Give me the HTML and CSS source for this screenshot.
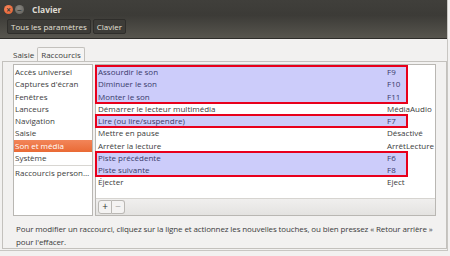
FILE: index.html
```html
<!DOCTYPE html>
<html lang="fr">
<head>
    <meta charset="UTF-8">
    <title>Clavier</title>
    <link rel="stylesheet" href="styles.css">
</head>
<body>
    <div class="window">
        <div class="header">
            <div class="titlebar">
                <span class="btn-close">&times;</span>
                <span class="btn-min">&minus;</span>
                <span class="title">Clavier</span>
            </div>
            <div class="toolbar">
                <span class="tool-btn">Tous les paramètres</span>
                <span class="tool-btn">Clavier</span>
            </div>
        </div>
        <div class="content">
            <div class="tabs">
                <span class="tab">Saisie</span>
                <span class="tab active">Raccourcis</span>
            </div>
            <div class="page">
                <div class="panes">
                    <ul class="sidebar">
                        <li>Accès universel</li>
                        <li>Captures d'écran</li>
                        <li>Fenêtres</li>
                        <li>Lanceurs</li>
                        <li>Navigation</li>
                        <li>Saisie</li>
                        <li class="selected">Son et média</li>
                        <li>Système</li>
                        <li class="sep">Raccourcis person…</li>
                    </ul>
                    <div class="shortcuts">
                        <div class="list">
                            <div class="group">
                                <div class="row"><span class="name">Assourdir le son</span><span class="key">F9</span></div>
                                <div class="row"><span class="name">Diminuer le son</span><span class="key">F10</span></div>
                                <div class="row"><span class="name">Monter le son</span><span class="key">F11</span></div>
                            </div>
                            <div class="row"><span class="name">Démarrer le lecteur multimédia</span><span class="key">MédiaAudio</span></div>
                            <div class="group">
                                <div class="row"><span class="name">Lire (ou lire/suspendre)</span><span class="key">F7</span></div>
                            </div>
                            <div class="row"><span class="name">Mettre en pause</span><span class="key">Désactivé</span></div>
                            <div class="row"><span class="name">Arrêter la lecture</span><span class="key">ArrêtLecture</span></div>
                            <div class="group">
                                <div class="row"><span class="name">Piste précédente</span><span class="key">F6</span></div>
                                <div class="row"><span class="name">Piste suivante</span><span class="key">F8</span></div>
                            </div>
                            <div class="row"><span class="name">Éjecter</span><span class="key">Eject</span></div>
                        </div>
                        <div class="list-tools">
                            <span class="small-btn">+</span><span class="small-btn dim">&minus;</span>
                        </div>
                    </div>
                </div>
                <p class="hint">Pour modifier un raccourci, cliquez sur la ligne et actionnez les nouvelles touches, ou bien pressez « Retour arrière » pour l'effacer.</p>
            </div>
        </div>
    </div>
</body>
</html>
```

FILE: styles.css
```css
body {
    margin: 0;
    padding: 0;
    background-color: #f2f1f0;
    font-family: "Open Sans", "DejaVu Sans", sans-serif;
    font-size: 8px;
    color: #3c3c3c;
    width: 450px;
    height: 256px;
    overflow: hidden;
}
.window {
    height: 250px;
    border-right: 1px solid #c8c6c2;
    border-bottom: 1px solid #c8c6c2;
    width: 447px;
}
.header {
    height: 38px;
    background: linear-gradient(#403f3b, #3c3b37 40%, #57554e);
    border-bottom: 1px solid #2e2d2a;
}
.titlebar {
    height: 18px;
    display: flex;
    align-items: center;
    padding-left: 4px;
}
.btn-close, .btn-min {
    width: 9px;
    height: 9px;
    border-radius: 50%;
    font-size: 8px;
    line-height: 9px;
    text-align: center;
    color: #3c3b37;
    margin-right: 2px;
    font-weight: bold;
}
.btn-close {
    background: radial-gradient(circle at 40% 35%, #f8895e, #e05a2a);
}
.btn-min {
    background: radial-gradient(circle at 40% 35%, #8a8882, #5e5c57);
    color: #3e3d39;
}
.title {
    margin-left: 6px;
    color: #dfdbd2;
    font-weight: bold;
    font-size: 8.5px;
}
.toolbar {
    display: flex;
    padding-left: 7px;
    padding-top: 1px;
    gap: 2px;
}
.tool-btn {
    height: 13px;
    line-height: 13px;
    padding: 0 3px;
    color: #e6e2da;
    background: #3d3c38;
    border: 1px solid #2f2e2b;
    border-radius: 2px;
    font-size: 8px;
}
.content {
    padding: 8px 0 0 2px;
}
.tabs {
    display: flex;
    align-items: flex-end;
    padding-left: 9px;
    height: 14px;
}
.tab {
    padding: 0 2px;
    line-height: 12px;
}
.tab.active {
    border: 1px solid #c3c1bd;
    border-bottom: none;
    background: #f5f4f3;
    padding: 0 3px;
    margin-left: 1px;
    line-height: 13px;
    border-radius: 2px 2px 0 0;
}
.page {
    border: 1px solid #c3c1bd;
    height: 184px;
    padding: 2px 10px 0 10px;
}
.panes {
    display: flex;
    gap: 2px;
    height: 152px;
}
.sidebar {
    list-style: none;
    margin: 0;
    padding: 1px 0 0 0;
    width: 78px;
    background: #fff;
    border: 1px solid #b9b7b3;
}
.sidebar li {
    height: 12.25px;
    line-height: 12.25px;
    padding-left: 1px;
    white-space: nowrap;
}
.sidebar li.selected {
    background: linear-gradient(#f28559, #ea6a35);
    color: #fff;
}
.sidebar li.sep {
    border-top: 1px solid #d8d6d2;
    margin-top: 1px;
    padding-top: 1px;
}
.shortcuts {
    flex: 1;
    border: 1px solid #b9b7b3;
    display: flex;
    flex-direction: column;
}
.list {
    flex: 1;
    background: #fff;
    padding-top: 1px;
}
.row {
    display: flex;
    height: 12.25px;
    line-height: 12.25px;
    padding-left: 2px;
    white-space: nowrap;
}
.row .name {
    width: 289px;
}
.group {
    width: 311px;
    background: #ccccfa;
    outline: 2px solid #e8001c;
    outline-offset: -1px;
    color: #3a3a6a;
}
.list-tools {
    height: 16px;
    background: linear-gradient(#f0efee, #e4e3e1);
    border-top: 1px solid #d6d4d0;
    display: flex;
    align-items: center;
    padding-left: 2px;
}
.small-btn {
    width: 12px;
    height: 12px;
    line-height: 11px;
    text-align: center;
    border: 1px solid #bab8b4;
    background: #f4f3f2;
    font-size: 10px;
    color: #333;
}
.small-btn:first-child {
    border-radius: 3px 0 0 3px;
}
.small-btn.dim {
    border-left: none;
    border-radius: 0 3px 3px 0;
    color: #aaa;
}
.hint {
    margin: 6px 0 0 3px;
    line-height: 13px;
    letter-spacing: -0.12px;
}
```
